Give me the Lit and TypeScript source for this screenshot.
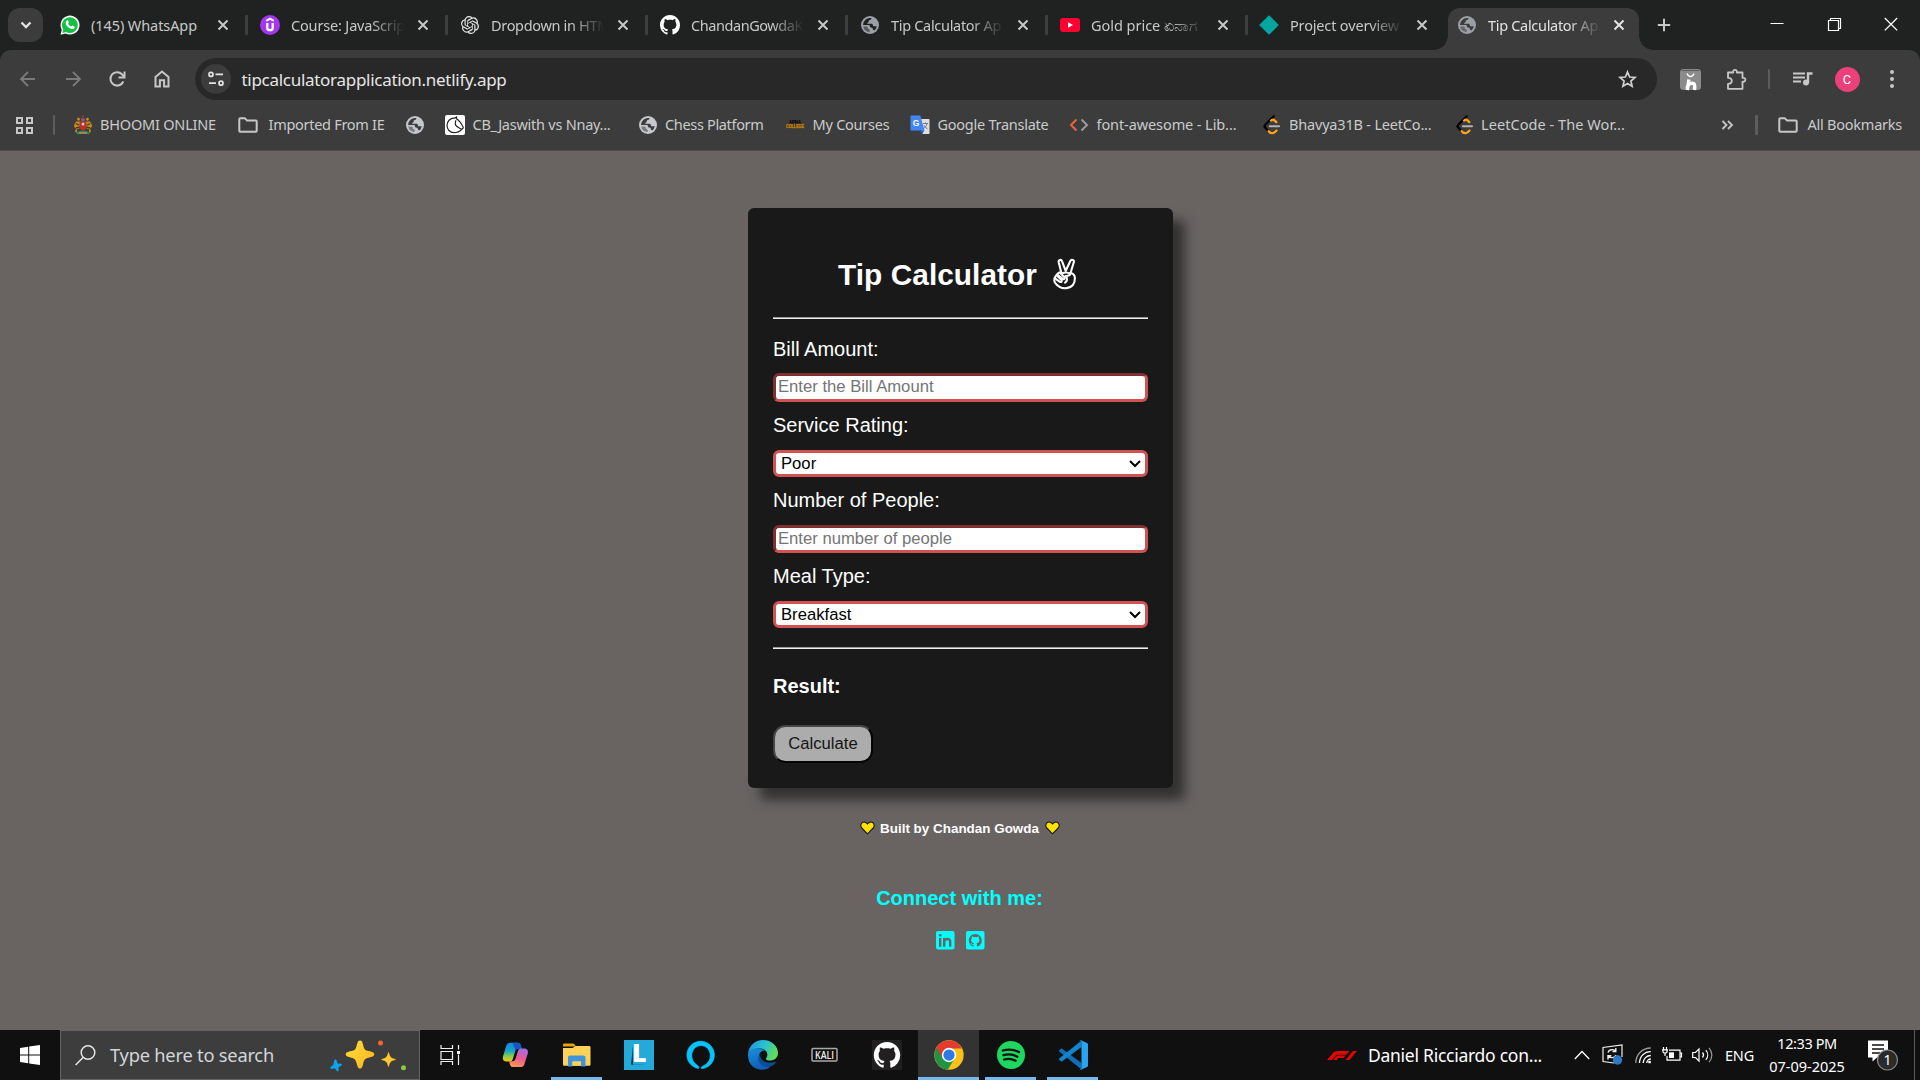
import { LitElement, html, css, svg } from "lit";
import { customElement } from "lit/decorators.js";

const OCTOCAT =
  "M8 0C3.58 0 0 3.58 0 8c0 3.54 2.29 6.53 5.47 7.59.4.07.55-.17.55-.38 0-.19-.01-.82-.01-1.49-2.01.37-2.53-.49-2.69-.94-.09-.23-.48-.94-.82-1.13-.28-.15-.68-.52-.01-.53.63-.01 1.08.58 1.23.82.72 1.21 1.87.87 2.33.66.07-.52.28-.87.51-1.07-1.78-.2-3.64-.89-3.64-3.95 0-.87.31-1.59.82-2.15-.08-.2-.36-1.02.08-2.12 0 0 .67-.21 2.2.82.64-.18 1.32-.27 2-.27s1.36.09 2 .27c1.53-1.04 2.2-.82 2.2-.82.44 1.1.16 1.92.08 2.12.51.56.82 1.27.82 2.15 0 3.07-1.87 3.75-3.65 3.95.29.25.54.73.54 1.48 0 1.07-.01 1.93-.01 2.2 0 .21.15.46.55.38A8.01 8.01 0 0016 8c0-4.42-3.58-8-8-8z";
const KNOT =
  "M22.2819 9.8211a5.9847 5.9847 0 0 0-.5157-4.9108 6.0462 6.0462 0 0 0-6.5098-2.9A6.0651 6.0651 0 0 0 4.9807 4.1818a5.9847 5.9847 0 0 0-3.9977 2.9 6.0462 6.0462 0 0 0 .7427 7.0966 5.98 5.98 0 0 0 .511 4.9107 6.051 6.051 0 0 0 6.5146 2.9001A5.9847 5.9847 0 0 0 13.2599 24a6.0557 6.0557 0 0 0 5.7718-4.2058 5.9894 5.9894 0 0 0 3.9977-2.9001 6.0557 6.0557 0 0 0-.7475-7.0729zm-9.022 12.6081a4.4755 4.4755 0 0 1-2.8764-1.0408l.1419-.0804 4.7783-2.7582a.7948.7948 0 0 0 .3927-.6813v-6.7369l2.02 1.1686a.071.071 0 0 1 .038.052v5.5826a4.504 4.504 0 0 1-4.4945 4.4944zm-9.6607-4.1254a4.4708 4.4708 0 0 1-.5346-3.0137l.142.0852 4.783 2.7582a.7712.7712 0 0 0 .7806 0l5.8428-3.3685v2.3324a.0804.0804 0 0 1-.0332.0615L9.74 19.9502a4.4992 4.4992 0 0 1-6.1408-1.6464zM2.3408 7.8956a4.485 4.485 0 0 1 2.3655-1.9728V11.6a.7664.7664 0 0 0 .3879.6765l5.8144 3.3543-2.0201 1.1685a.0757.0757 0 0 1-.071 0l-4.8303-2.7865A4.504 4.504 0 0 1 2.3408 7.872zm16.5963 3.8558L13.1038 8.364 15.1192 7.2a.0757.0757 0 0 1 .071 0l4.8303 2.7913a4.4944 4.4944 0 0 1-.6765 8.1042v-5.6772a.79.79 0 0 0-.407-.667zm2.0107-3.0231l-.142-.0852-4.7735-2.7818a.7759.7759 0 0 0-.7854 0L9.409 9.2297V6.8974a.0662.0662 0 0 1 .0284-.0615l4.8303-2.7866a4.4992 4.4992 0 0 1 6.6802 4.66zM8.3065 12.863l-2.02-1.1638a.0804.0804 0 0 1-.038-.0567V6.0742a4.4992 4.4992 0 0 1 7.3757-3.4537l-.142.0805L8.704 5.459a.7948.7948 0 0 0-.3927.6813zm1.0976-2.3654l2.602-1.4998 2.6069 1.4998v2.9994l-2.5974 1.4997-2.6067-1.4997Z";

const icon = (w: number, h: number, vb: string, body: unknown) =>
  html`<svg class="ico" width=${w} height=${h} viewBox=${vb} fill="none">${body}</svg>`;

const globe = (c: string, bg: string) =>
  icon(20, 20, "0 0 20 20", svg`
    <circle cx="10" cy="10" r="9" fill=${c}/>
    <path d="M11.300 3.100c.3 1.300-.6 1.900-1.500 2-1 .1-1.200.8-1.100 1.500.1.700-.4 1.100-1.200 1.200-.700.1-.7.900.1 1h3.500c1.200 0 1.800.7 1.900 1.600.1.700.600.900 1.300.9h2.500a7 7 0 0 1-2.600 4.200c-.9-.3-1.400-1-1.400-1.900 0-1.500-2.800-.4-2.900-2.200 0-.9-.500-1.300-1.400-1.300H3A7 7 0 0 1 11.300 3.100z" fill=${bg}/>
    <path d="M3.200 11.500h3.300c1 .1 1.200.8 1.300 1.600.1.900.700 1 1.400 1.300.8.300.8 1.500.3 2.600A7 7 0 0 1 3.200 11.500z" fill=${bg} opacity=".55"/>`);

const folder = () =>
  icon(22, 20, "0 0 22 20", svg`<path d="M2.300 15.800V4.200c0-.6.400-.9.900-.9h4.600l2.300 2.300h8.700c.6 0 .9.400.9.900v9.300c0 .5-.3.900-.9.900H3.200c-.5 0-.9-.4-.9-.9z" stroke="#c7c7c7" stroke-width="2"/>`);

const leet = () =>
  icon(20, 20, "0 0 20 20", svg`
    <path d="M11.800 1.200L3.300 9.700c-.9.900-.9 2 0 2.900l3.600 3.900" stroke="#000" stroke-width="2.300" stroke-linecap="round"/>
    <path d="M9 5.600c1.300-1.100 2.700-1 3.800 0l1.500 1.500M6.700 16.200c1.700 2.300 4.600 2.500 6.300.8l1.500-1.500" stroke="#ffa116" stroke-width="2.300" stroke-linecap="round"/>
    <path d="M7.800 11.300h9.200" stroke="#b3b3b3" stroke-width="2.100" stroke-linecap="round"/>`);

const cross = (c: string) =>
  icon(12, 12, "0 0 12 12", svg`<path d="M1.500 1.500l9 9M10.500 1.500l-9 9" stroke=${c} stroke-width="2"/>`);

const favicons = {
  whatsapp: icon(20, 20, "0 0 20 20", svg`
    <path d="M.5 19.700l1.300-4.900A9.500 9.500 0 1 1 5.500 18.400z" fill="#fff"/>
    <path d="M2.300 17.900l1-3.400A7.900 7.900 0 1 1 6 17z" fill="#12c143"/>
    <path d="M6.900 5.400c.4-.4 1-.3 1.200.2l.7 1.600c.1.400-.6 1-.7 1.400.6 1.300 1.800 2.400 3.200 3 .4-.1.900-1.100 1.300-1l1.800.9c.5.3.2 1.500-.4 1.900-2 1.400-4.700.1-6.500-1.800-1.700-1.900-2.800-4.600-.6-6.200z" fill="#fff"/>`),
  udemy: icon(20, 20, "0 0 20 20", svg`
    <circle cx="10" cy="10" r="10" fill="#a435f0"/>
    <path d="M6.200 5.900L10 3.700l3.800 2.200" stroke="#fff" stroke-width="1.900"/>
    <path d="M7.300 8v4.900c0 1.500 1 2.300 2.700 2.300s2.700-.8 2.700-2.300V8" stroke="#fff" stroke-width="2.300"/>`),
  knot: icon(18, 18, "0 0 24 24", svg`<path d=${KNOT} fill="#e8e8e8"/>`),
  github: icon(20, 20, "0 0 16 16", svg`<path d=${OCTOCAT} fill="#fff"/>`),
  globe: globe("#9aa0a6", "#202222"),
  globeActive: globe("#9aa0a6", "#3c3c3c"),
  youtube: icon(20, 20, "0 0 20 20", svg`<rect y="3" width="20" height="14" rx="3" fill="#ff0033"/><path d="M8 7.300v5.400l5-2.700z" fill="#fff"/>`),
  diamond: icon(20, 20, "0 0 20 20", svg`<path d="M10 1.200L18.800 10 10 18.800 1.200 10z" fill="#05a6a1" stroke="#05a6a1" stroke-width="1.600" stroke-linejoin="round"/>`),
};

const tabs = [
  { icon: favicons.whatsapp, title: "(145) WhatsApp", w: 106, box: 200 },
  { icon: favicons.udemy, title: "Course: JavaScrip", w: 114, box: 200 },
  { icon: favicons.knot, title: "Dropdown in HTM", w: 119, box: 200 },
  { icon: favicons.github, title: "ChandanGowdaK", w: 112, box: 200 },
  { icon: favicons.globe, title: "Tip Calculator Ap", w: 110, box: 200 },
  { icon: favicons.youtube, title: "Gold price ", w: 73, tail: "ಏನಾಗ", box: 199 },
  { icon: favicons.diamond, title: "Project overview", w: 109, box: 198 },
  { icon: favicons.globeActive, title: "Tip Calculator Ap", w: 110, box: 190.5, active: true },
];

const emblem = icon(20, 20, "0 0 20 20", svg`
  <path d="M9 .500h2v2H9zM7.500 3h5l-1 3h-3z" fill="#a33a2c"/>
  <path d="M4 3.500l2-1 1 2-2 1.500zM16 3.500l-2-1-1 2 2 1.500z" fill="#cf9a1c"/>
  <path d="M1 12c0-3 1-5 3-6l1 1 2-1.500.5 5.500L6 14H4v3H2l1-4zM19 12c0-3-1-5-3-6l-1 1-2-1.500-.5 5.500L14 14h2v3h2l-1-4z" fill="#bd8c1e"/>
  <path d="M2.500 8.500L6 10M17.500 8.500L14 10M3 13l4-1M17 13l-4-1" stroke="#4d3c1e" stroke-width="1.300"/>
  <path d="M6.500 6h7v6c0 2-2 3-3.500 4-1.500-1-3.500-2-3.500-4z" fill="#b8302c"/>
  <circle cx="10" cy="9" r="1.500" fill="#e3c9b8"/><path d="M8 4.500h4M8.500 5.500h3" stroke="#3f74b5"/>
  <path d="M2.500 17.500c5-2.500 10-2.500 15 0l-2 2c-3.500-1.500-7.500-1.500-11 0z" fill="#3d7d5d"/>
  <path d="M6 18h8" stroke="#c9a648" stroke-width="1.200"/>`);

const bookmarks = [
  { icon: emblem, title: "BHOOMI ONLINE", w: 116, box: 164, gap: 7 },
  { icon: folder(), title: "Imported From IE", w: 116, box: 168, gap: 9.5 },
  { icon: globe("#c4c7cc", "#3c3c3c"), title: "", w: 0, box: 40, gap: 0 },
  {
    icon: icon(20, 20, "0 0 20 20", svg`<rect width="20" height="20" rx="2" fill="#fff"/>
      <path d="M9.500 3.200C5 3 2 6.500 2 10.400c0 4 3 7.200 6.800 7.300 3.600 0 5.800-1 7.700-3M9.500 3.200l2-1.200.2 2c3.200 1.800 5 5 6.500 8.300.3 1-1.200 2.200-2.200 1.700-2-1.500-4.600-2-5.500-4.200-.6-1.500.3-3 .2-4.600" stroke="#222" stroke-width="1.200"/>`),
    title: "CB_Jaswith vs Nnay...", w: 138, box: 193, gap: 7.5,
  },
  { icon: globe("#c4c7cc", "#3c3c3c"), title: "Chess Platform", w: 98.5, box: 147, gap: 7 },
  {
    icon: icon(20, 20, "0 0 20 20", svg`<text x="10" y="8.800" text-anchor="middle" textLength="12" lengthAdjust="spacingAndGlyphs" font-family="Liberation Sans" font-weight="700" font-size="5" fill="#000">APNA</text>
      <text x="10" y="13" text-anchor="middle" textLength="18" lengthAdjust="spacingAndGlyphs" font-family="Liberation Sans" font-weight="700" font-size="5" fill="#f5a80c" stroke="#a86c00" stroke-width=".3">COLLEGE</text>`),
    title: "My Courses", w: 77, box: 125, gap: 7.5,
  },
  {
    icon: icon(20, 20, "0 0 20 20", svg`<path d="M9 4h9.500c.6 0 1 .4 1 1v13c0 .6-.4 1-1 1h-6z" fill="#dedede"/>
      <path d="M13 8.500h5M15.500 7.500v1M17 8.500c-.5 2.500-2 4.200-4 5.200M14 10.500c.8 1.500 2 2.600 3.500 3.300" stroke="#6c7a89"/>
      <path d="M1.500.6h8.800l4.200 14.800H1.500c-.6 0-1-.4-1-1V1.600c0-.6.400-1 1-1z" fill="#4285f4"/><path d="M9.300 15.400h5.200L12 19z" fill="#2a56c6"/>
      <text x="6" y="11" text-anchor="middle" font-family="Liberation Sans" font-weight="700" font-size="8.500" fill="#fff">G</text>`),
    title: "Google Translate", w: 111, box: 159, gap: 7.5,
  },
  {
    icon: icon(20, 20, "0 0 20 20", svg`<path d="M7.500 4.500L2 10l5.500 5.500" stroke="#e8653a" stroke-width="2"/><path d="M12.500 4.500L18 10l-5.500 5.500" stroke="#9b9b9b" stroke-width="2"/>`),
    title: "font-awesome - Lib...", w: 140, box: 193, gap: 7.5,
  },
  { icon: leet(), title: "Bhavya31B - LeetCo...", w: 142.5, box: 193, gap: 7 },
  { icon: leet(), title: "LeetCode - The Wor...", w: 144, box: 193, gap: 6 },
];

const apps = [
  { art: icon(28, 32, "0 0 28 32", svg`
      <defs>
        <linearGradient id="cpA" x1="0" y1="0" x2="0" y2="1"><stop offset="0" stop-color="#1487e0"/><stop offset=".45" stop-color="#18a6c9"/><stop offset=".7" stop-color="#7fce4b"/><stop offset="1" stop-color="#f4c71c"/></linearGradient>
        <linearGradient id="cpB" x1=".6" y1="0" x2=".3" y2="1"><stop offset="0" stop-color="#a46ae8"/><stop offset=".5" stop-color="#ec5a8e"/><stop offset="1" stop-color="#fb9a50"/></linearGradient>
      </defs>
      <g transform="translate(1.500 2.500) scale(.92 .84)">
      <path d="M8.500 1.500h8.200c1.600 0 2.400 1 2.900 2.500L21 8.500h-4c-1.800 0-2.600 1.200-3.200 3.200l-2.600 9.100c-.6 2-1.600 3-3.600 3H4.200C1 23.800-.4 21 .6 17.500L4 5.500c.7-2.500 2-4 4.500-4z" fill="url(#cpA)"/>
      <path d="M11 1.500h5.700c1.600 0 2.400 1 2.900 2.500L21 8.500h-4c-1.400 0-2.400.8-3 2.400z" fill="#1b55c4"/>
      <path d="M19.500 30.500h-8.200c-1.600 0-2.400-1-2.900-2.500L7 23.500h4c1.800 0 2.600-1.200 3.200-3.200l2.600-9.100c.6-2 1.600-3 3.600-3h3.400c3.200 0 4.600 2.800 3.600 6.300L24 26.500c-.7 2.500-2 4-4.500 4z" fill="url(#cpB)"/></g>`), open: false },
  { art: icon(28, 24, "0 0 28 24", svg`
      <path d="M0 2c0-1 .6-1.500 1.500-1.500H10c.8 0 1.200.3 1.600.9L13 3.500H0z" fill="#e5a50b"/>
      <path d="M0 5h9.500l3-2H26c1 0 1.500.6 1.500 1.500v16.700c0 1-.6 1.500-1.500 1.500H1.500C.6 22.700 0 22.200 0 21.200z" fill="#ffd257"/>
      <path d="M5 23.500V14.500c0-1.200.8-2 2-2h13.500c1.200 0 2 .8 2 2v9h-4.500V18.500h-8.500v5z" fill="#3e95dc"/>
      <path d="M9.500 22.700V18.500H18v4.200z" fill="#ffd257"/>`), open: true },
  { art: icon(30, 30, "0 0 30 30", svg`<rect width="30" height="30" fill="#24a9d8"/><path d="M9 5.500v19.500h13L7 24.500z" fill="#0c3557"/><text x="8" y="22.200" font-family="Open Sans" font-weight="800" font-size="25" fill="#fff">L</text>`), open: false },
  { art: icon(30, 30, "0 0 30 30", svg`<path d="M12.500 28.500A13.700 13.700 0 1 1 16 28.600c-1-.3-1-1-.4-1.700 1-1 8.700-3 8.700-11.100 0-6-4-10.200-9.300-10.200S5.700 10 5.700 15.800c0 4.200 2.300 7.500 5.800 9.700 1.500 1 1.700 1.600 1 3z" fill="#04c4fb" stroke="#04c4fb" stroke-width=".8"/>`), open: false },
  { art: icon(30, 30, "0 0 30 30", svg`
      <defs><linearGradient id="eA" x1="0" y1=".3" x2="1" y2=".6"><stop offset="0" stop-color="#1d9ae0"/><stop offset=".5" stop-color="#2bc0d3"/><stop offset="1" stop-color="#66e04e"/></linearGradient>
      <linearGradient id="eB" x1="0" y1="0" x2=".4" y2="1"><stop offset="0" stop-color="#1a8fdd"/><stop offset="1" stop-color="#0f5fb9"/></linearGradient></defs>
      <path d="M0 14C.6 6 7 0 15 0c9 0 15 6.500 15 13 0 5-4 7.500-8.300 7.500-3.300 0-4.400-1.200-3.400-2.400 2.800-3.800 0-9.500-6.300-9.500C6.500 8.600 2 10 0 14z" fill="url(#eA)"/>
      <path d="M0 15c0-4.500 4.500-7 9-6.800 4 .2 6.500 1.300 8 3-4.500-.8-6.500 3-6 7 .5 5 5 9.800 11.500 8.500C16 32.500 0 30.500 0 15z" fill="url(#eB)"/>
      <path d="M11.600 14.500C8.200 19 12 28 21 26.900c3-.5 5.400-2.400 6.700-4.400.4-.8-.3-1-.8-.8C19 25 12.500 20.500 11.600 14.500z" fill="#0b4d98"/>`), open: false },
  { art: icon(28, 16, "0 0 28 16", svg`<rect x="1" y="1.500" width="25" height="12.500" rx="1" stroke="#a9a9a9" stroke-width="1.500"/><text x="13.500" y="12" text-anchor="middle" textLength="19" lengthAdjust="spacingAndGlyphs" font-family="Open Sans" font-weight="600" font-size="11" fill="#eee">KALI</text>`), open: false },
  { art: icon(30, 30, "0 0 30 30", svg`<rect width="30" height="30" fill="#211f20"/><path d=${OCTOCAT} fill="#fff" transform="translate(1.800 2) scale(1.650)"/>`), open: false },
  { art: icon(30, 30, "0 0 48 48", svg`
      <circle cx="24" cy="24" r="23.500" fill="#fbc116"/>
      <path d="M24 24L3.500 12.500A23.500 23.500 0 0 0 22 47.400l11-18z" fill="#229342"/>
      <path d="M24 13.500h20.700A23.500 23.500 0 0 0 3.600 12.300l10.600 17z" fill="#e33b2e"/>
      <circle cx="24" cy="24" r="11.500" fill="#fff"/><circle cx="24" cy="24" r="9" fill="#2c7be5"/>`), open: true, current: true },
  { art: icon(28, 28, "0 0 28 28", svg`<circle cx="14" cy="14" r="14" fill="#1ed760"/><path d="M5.800 9.500c5.500-1.500 11.500-1 16.200 1.600M6.500 14.200c4.700-1.300 9.700-.8 13.800 1.500M7.200 18.500c3.800-1 8-.6 11.400 1.300" stroke="#111" stroke-width="2.300" stroke-linecap="round"/>`), open: true },
  { art: icon(30, 30, "0 0 30 30", svg`
      <path d="M1.200 10.300L3 8.700c.4-.3.800-.3 1.200 0L23.500 23v6.500L1.200 11.500c-.4-.4-.4-.8 0-1.200z" fill="#0e6fb8"/>
      <path d="M1.200 19.700L3 21.300c.4.3.8.3 1.200 0L23.500 7V.5L1.200 18.500c-.4.400-.4.800 0 1.200z" fill="#1284ce"/>
      <path d="M23 .2L29 3c.6.300 1 .8 1 1.500v21c0 .700-.4 1.200-1 1.500l-6 2.800c-.6.3-1.300 0-1.700-.5 1 .6 2.200 0 2.200-1.200V1.900c0-1.200-1.200-1.800-2.200-1.200.4-.5 1.100-.8 1.700-.5z" fill="#27a4f2"/>`), open: true },
];

@customElement("app-root")
export class AppRoot extends LitElement {
  static styles = css`
    :host { display: block; width: 1920px; height: 1080px; overflow: hidden; font-family: "Noto Sans", "Open Sans", sans-serif; }
    .screen { display: flex; flex-direction: column; width: 1920px; height: 1080px; }
    .ico { display: block; flex: none; overflow: visible; }
    .fit { display: inline-block; white-space: pre; flex: none; }

    .strip { display: flex; height: 50px; background: #202222; box-sizing: border-box; align-items: flex-start; }
    .search-tabs { width: 35px; height: 34px; margin: 8px 8px 0; border-radius: 12px; background: #3c3c3c; display: grid; place-items: center; }
    .tab { display: flex; align-items: center; height: 50px; padding-left: 9px; box-sizing: border-box; position: relative; flex: none; }
    .fav { width: 20px; display: grid; place-items: center; margin-right: 11px; }
    .title { width: 113px; flex: none; overflow: hidden; white-space: nowrap; font-size: 14.5px; line-height: 24px; color: #c7c9c8; -webkit-mask-image: linear-gradient(90deg, #000 80px, transparent 113px); }
    .title.whole { -webkit-mask-image: none; }
    .tail { font-size: 15.5px; }
    .close { width: 12px; margin-left: 12.5px; }
    .sep { width: 2.5px; height: 20px; margin-left: 16.5px; background: #3d3f3f; border-radius: 1px; }
    .tab.active { height: 42px; margin: 8px 0 0; background: #3c3c3c; border-radius: 12px 12px 0 0; padding-bottom: 8px; }
    .tab.active .title { color: #e3e3e3; width: 111px; }
    .tab.active .close { margin-left: 14px; }
    .tab.active::before, .tab.active::after { content: ""; position: absolute; bottom: 0; width: 14px; height: 14px; }
    .tab.active::before { left: -14px; background: radial-gradient(circle at 0 0, transparent 13.5px, #3c3c3c 14px); }
    .tab.active::after { right: -14px; background: radial-gradient(circle at 100% 0, transparent 13.5px, #3c3c3c 14px); }
    .newtab { margin: 18px 0 0 18.5px; }
    .winbtns { margin-left: auto; display: flex; gap: 43px; padding: 17px 22px 0 0; }

    .chrome { background: #202222; height: 101px; flex: none; }
    .bars { height: 101px; box-sizing: border-box; border-bottom: 1px solid #504f4e; border-radius: 11px 11px 0 0; background: #3c3c3c; display: flex; flex-direction: column; padding-top: 8px; }
    .toolbar { display: flex; align-items: center; height: 42px; padding-left: 18px; flex: none; }
    .nav { display: flex; gap: 24.7px; width: 177px; }
    .omni { display: flex; align-items: center; width: 1462px; height: 42px; border-radius: 21px; background: #282828; box-sizing: border-box; padding: 0 19px 0 6px; }
    .site { width: 30px; height: 30px; border-radius: 50%; background: #3c3c3c; display: grid; place-items: center; }
    .url { margin-left: 10.5px; padding-top: 1.5px; font-size: 17px; line-height: 24px; color: #e6e6e6; flex: 1; }
    .tools { display: flex; align-items: center; margin-left: 23px; }
    .vsep { width: 2.5px; height: 20px; background: #5d5d5d; border-radius: 1px; flex: none; }
    .avatar { width: 25px; height: 25px; border-radius: 50%; background: #ec407a; color: #fff; font: 13px/25px "Roboto", sans-serif; text-align: center; margin: 0 30.5px 0 21px; }
    .marks { display: flex; align-items: center; height: 50px; padding-left: 15px; font-size: 14.5px; line-height: 20px; color: #c9cbcb; }
    .marks .fit { padding-bottom: 2px; }
    .marks .start { margin-left: 18.5px; margin-right: 18px; }
    .mark { display: flex; align-items: center; flex: none; }
    .rest { margin-left: auto; display: flex; align-items: center; padding-right: 18px; }

    .page { height: 879px; background: #696462; display: flex; flex-direction: column; align-items: center; font-family: "Liberation Sans", Arial, sans-serif; flex: none; }
    .card { margin: 57px 0 0 1px; width: 425px; height: 580px; box-sizing: border-box; padding: 50px 25px 25px; border-radius: 6px; background: #191919; color: #fff; box-shadow: 12px 12px 12px #333131; display: flex; flex-direction: column; flex: none; }
    .card h2 { margin: 0 0 25px; padding-left: 65px; font-size: 29.8px; line-height: 34px; height: 34px; display: flex; align-items: center; gap: 16px; flex: none; }
    .rule { border-top: 1px solid #9a9a9a; border-bottom: 1px solid #eee; flex: none; }
    label { font-size: 20px; line-height: 23px; height: 23px; margin: 12px 0 13px; flex: none; }
    label.first { margin: 19px 0 12px; }
    input { box-sizing: border-box; width: 375px; height: 29px; border: 3px solid; border-color: #7f3030 #d05252 #d05252 #7f3030; border-radius: 6px; padding: 0 2px 1px; font: 16.67px "Liberation Sans", sans-serif; background: #fff; flex: none; }
    input.short { height: 28px; }
    input::placeholder { color: #757575; opacity: 1; }
    select { zoom: 1.25; box-sizing: border-box; width: 300px; height: 21.6px; border: 2.4px solid #d05252; border-radius: 5px; font: 13.333px "Liberation Sans", sans-serif; color: #000; background-color: #fff; padding: 0; flex: none; }
    .rule.last { margin-top: 19px; }
    .result { margin: 26px 0 27px; font-size: 20px; line-height: 23px; font-weight: 700; }
    button { width: 100px; height: 38px; box-sizing: border-box; border: 2px solid; border-color: #454545 #050505 #050505 #454545; border-radius: 12.5px; background: #acacac; color: #151515; font: 16.67px "Liberation Sans", sans-serif; padding: 0; flex: none; }
    .built { margin: 32px 1px 0 0; height: 16px; display: flex; align-items: center; gap: 5.5px; color: #fff; font-size: 13.4px; font-weight: 700; }
    .connect { margin: 50.5px 1px 0 0; font-size: 20px; line-height: 23px; font-weight: 700; color: #0ff; }
    .links { margin-top: 21.5px; display: flex; gap: 11.5px; }

    .taskbar { height: 50px; background: #101010; display: flex; color: #fff; flex: none; }
    .win { width: 60px; display: grid; place-items: center; }
    .search { width: 360px; box-sizing: border-box; border: 1px solid #656565; background: #3d3d3d; display: flex; align-items: center; padding-left: 14px; font-size: 18.3px; color: #d3d6da; }
    .search .fit { margin: 0 0 0 14px; line-height: 26px; }
    .spark { margin-left: 56px; }
    .view { width: 60px; display: grid; place-items: center; margin-right: 4px; }
    .app { width: 61px; height: 50px; display: grid; place-items: center; position: relative; margin-right: 1px; }
    .app.open::after { content: ""; position: absolute; bottom: 0; left: 5px; right: 5px; height: 3px; background: #76b9ed; }
    .app.current { background: #333; }
    .app.current::after { left: 0; right: 0; }
    .tray { margin-left: auto; display: flex; align-items: center; font-size: 14.5px; }
    .news { font-size: 17.5px; margin: 0 32px 0 11px; }
    .clock { display: flex; flex-direction: column; align-items: center; width: 76px; margin: 0 23px 0 15px; line-height: 23.3px; font-size: 14.5px; }
    .peek { width: 1px; height: 50px; background: #5c5c5c; margin: 0 5px 0 15px; }
  `;

  /** Spreads every label over its stated width by adjusting the tracking. */
  protected firstUpdated(): void {
    this.renderRoot.querySelectorAll<HTMLElement>(".fit").forEach((el) => {
      const want = Number(el.dataset.w);
      const n = (el.textContent ?? "").length;
      if (want && n) el.style.letterSpacing = `${(want - el.getBoundingClientRect().width) / n}px`;
    });
  }

  private fit(text: string, w: number) {
    return html`<span class="fit" data-w=${w}>${text}</span>`;
  }

  private renderTabs() {
    return html`<div class="strip">
      <div class="search-tabs">${icon(12, 8, "0 0 12 8", svg`<path d="M1.500 1.500L6 6l4.500-4.500" stroke="#e3e3e3" stroke-width="2.300"/>`)}</div>
      ${tabs.map((t, i) => html`<div class="tab ${t.active ? "active" : ""}" style="width:${t.box}px">
        <div class="fav">${t.icon}</div>
        <div class="title ${i === 0 ? "whole" : ""}">${this.fit(t.title, t.w)}${t.tail ? html`<span class="tail">${t.tail}</span>` : ""}</div>
        <div class="close">${cross(t.active ? "#e3e3e3" : "#c7c7c7")}</div>
        ${i < 6 ? html`<div class="sep"></div>` : ""}
      </div>`)}
      <div class="newtab">${icon(14, 14, "0 0 14 14", svg`<path d="M7 .8v12.400M.8 7h12.400" stroke="#c7c7c7" stroke-width="2"/>`)}</div>
      <div class="winbtns">
        ${icon(14, 14, "0 0 14 14", svg`<path d="M.5 6.500h13" stroke="#fff"/>`)}
        ${icon(14, 14, "0 0 14 14", svg`<path d="M1.500 3.500h10v10h-10zM3.500 3V1.500h10v10H12" stroke="#fff" stroke-width="1.200"/>`)}
        ${icon(14, 14, "0 0 14 14", svg`<path d="M.8 1l12.400 12.400M13.200 1L.8 13.400" stroke="#fff" stroke-width="1.300"/>`)}
      </div>
    </div>`;
  }

  private renderBars() {
    return html`<div class="chrome"><div class="bars">
      <div class="toolbar">
        <div class="nav">
          ${icon(20, 20, "0 0 20 20", svg`<path d="M17 10H3.500M10 3l-7 7 7 7" stroke="#7a7a7a" stroke-width="1.800"/>`)}
          ${icon(20, 20, "0 0 20 20", svg`<path d="M3 10h13.500M10 3l7 7-7 7" stroke="#7a7a7a" stroke-width="1.800"/>`)}
          ${icon(20, 20, "0 0 20 20", svg`<path d="M16.300 12.500A6.700 6.700 0 1 1 15 5.300L17 7.500" stroke="#c7c7c7" stroke-width="2"/><path d="M17.500 2.500v6h-6" stroke="#c7c7c7" stroke-width="2"/>`)}
          ${icon(20, 20, "0 0 20 20", svg`<path d="M3.500 17.500V8L10 2.500 16.500 8v9.500h-4.400V11.300H7.900v6.200z" stroke="#c7c7c7" stroke-width="2"/>`)}
        </div>
        <div class="omni">
          <div class="site">${icon(16, 16, "0 0 16 16", svg`<circle cx="3" cy="3.400" r="2" stroke="#e3e3e3" stroke-width="1.700"/><path d="M7.500 3.400h7.500M1 12.200h7" stroke="#e3e3e3" stroke-width="1.800"/><circle cx="13" cy="12.200" r="2" stroke="#e3e3e3" stroke-width="1.700"/>`)}</div>
          <div class="url">${this.fit("tipcalculatorapplication.netlify.app", 265)}</div>
          ${icon(21, 20, "0 0 21 20", svg`<path d="M10.500 3l2.100 5 5.400.5-4.100 3.500 1.200 5.300-4.600-2.800-4.600 2.800 1.200-5.300L3 8.500l5.400-.5z" stroke="#d0d0d0" stroke-width="1.700"/>`)}
        </div>
        <div class="tools">
          ${icon(21, 21, "0 0 21 21", svg`<rect width="21" height="21" rx="3.500" fill="#8b8b8b"/><path d="M2 1.500h17" stroke="#5d5d5d"/><path d="M7 4.500c1.500 4 5.500 4 7 0" stroke="#fff" stroke-width="1.300"/><path d="M7.300 21l1.600-10.500M7 19.500c.7-4.500 2.500-5.200 5-5.200 3 0 3 2 2.500 6.700" stroke="#fff" stroke-width="3.400"/>`)}
          <span style="width:25px"></span>
          ${icon(21, 21, "0 0 21 21", svg`<path d="M2 3.500h5.200c-.4-1.800.6-2.700 1.800-2.700s2.200.9 1.800 2.700h5.700v5.400c1.900-.3 2.900.6 2.900 1.900s-1 2.200-2.900 1.900v7.100H2v-5c2.600 0 3.800-1.400 3.800-3S4.600 8.800 2 8.800z" stroke="#c7c7c7" stroke-width="1.800" stroke-linejoin="round"/>`)}
          <span style="width:20.5px"></span><span class="vsep"></span><span style="width:22.5px"></span>
          ${icon(21, 18, "0 0 21 18", svg`<path d="M0 3.500h12M0 7.500h12M0 11.500h8" stroke="#c7c7c7" stroke-width="1.900"/><circle cx="13" cy="12.500" r="3" fill="#c7c7c7"/><path d="M15 13V3.500h4.500" stroke="#c7c7c7" stroke-width="2.400"/>`)}
          <div class="avatar">C</div>
          ${icon(4, 20, "0 0 4 20", svg`<circle cx="2" cy="3" r="2" fill="#c7c7c7"/><circle cx="2" cy="10" r="2" fill="#c7c7c7"/><circle cx="2" cy="17" r="2" fill="#c7c7c7"/>`)}
        </div>
      </div>
      <div class="marks">
        ${icon(19, 19, "0 0 19 19", svg`<path d="M2 2h5v5H2zM12 2h5v5h-5zM2 12h5v5H2zM12 12h5v5h-5z" stroke="#c7c7c7" stroke-width="2"/>`)}
        <div class="vsep start"></div>
        ${bookmarks.map((b) => html`<div class="mark" style="width:${b.box}px;gap:${b.gap}px">${b.icon}${b.title ? this.fit(b.title, b.w) : ""}</div>`)}
        <div class="rest">
          ${icon(13, 10, "0 0 13 10", svg`<path d="M1.500 1l4 4-4 4M7 1l4 4-4 4" stroke="#c7c7c7" stroke-width="1.800"/>`)}
          <span style="width:21px"></span><span class="vsep"></span><span style="width:19px"></span>
          ${folder()}<span style="width:9px"></span>${this.fit("All Bookmarks", 94.5)}
        </div>
      </div>
    </div></div>`;
  }

  private renderPage() {
    const heart = icon(15, 14, "0 0 15 14", svg`<path d="M7.500 12.800L1.800 7C.3 5.400.6 3 2 1.800c1.600-1.300 4-.9 5.500 1.200C9 .900 11.400.500 13 1.800c1.400 1.200 1.700 3.600.2 5.200z" fill="#ffe300" stroke="#1a1a1a" stroke-width="1.100"/>`);
    return html`<div class="page">
      <div class="card">
        <h2>${this.fit("Tip Calculator", 199)}
          ${icon(24, 32, "0 0 24 32", svg`<g stroke="#fff" stroke-width="2.100" stroke-linejoin="round" stroke-linecap="round" transform="translate(0 -1)">
            <path d="M8.300 14.500L5.700 4.300C5.200 1.800 8.300.9 9.100 3.300L12.700 12.800M12.900 12.500L17.300 3c1-2.200 4.200-1.200 3.500 1.200L17.500 15"/>
            <path d="M17.500 14.800c2.900.8 4.300 2.300 4.400 5.200.1 3-.5 5.300-2.200 7.300-2.600 3-9 4-12.700 1.800-3-1.800-5.500-3.500-5.700-6.600-.1-2 .5-3.400 1.700-4.800l1.700-2.100c.8-.9 1.900-1.400 3.600-1.100"/>
            <path d="M2.600 20.800l4 2.800c1.700 1.100 2.900-.6 1.600-1.900L4.900 18.600M5.200 17.200l4.500 3.600c1.500 1 2.700-.4 1.500-1.700L7.800 15.500M9 15.500c3.300-1.700 6.200-1.100 8.500.3-.5 1.800-2.500 2.300-5 2.200 2.700 1.900 1.600 5.200-.4 6.600"/></g>`)}
        </h2>
        <div class="rule"></div>
        <label class="first">Bill Amount:</label>
        <input type="text" placeholder="Enter the Bill Amount" />
        <label>Service Rating:</label>
        <select><option>Poor</option></select>
        <label>Number of People:</label>
        <input class="short" type="text" placeholder="Enter number of people" />
        <label>Meal Type:</label>
        <select><option>Breakfast</option></select>
        <div class="rule last"></div>
        <div class="result">Result:</div>
        <button>Calculate</button>
      </div>
      <div class="built">${heart}${this.fit("Built by Chandan Gowda", 159)}${heart}</div>
      <div class="connect">Connect with me:</div>
      <div class="links">
        ${icon(18.5, 19, "0 0 18.500 19", svg`<rect width="18.500" height="18.500" rx="2" fill="#0ff"/><rect x="2.900" y="3" width="2.700" height="2.600" rx="1.300" fill="#696463"/><path d="M4.200 7v8.800M8.200 7v8.800M8.200 10.500c0-3 6-3.600 6 0v5.300" stroke="#696463" stroke-width="2.400"/>`)}
        ${icon(18.5, 19, "0 0 18.500 19", svg`<rect width="18.500" height="18.500" rx="2" fill="#0ff"/><path d=${OCTOCAT} fill="#696463" transform="translate(2.800 2.900) scale(.81)"/>`)}
      </div>
    </div>`;
  }

  private renderTaskbar() {
    return html`<div class="taskbar">
      <div class="win">${icon(20, 20, "0 0 20 20", svg`<path d="M0 2.900L8.200 1.700v7.800H0zM9.200 1.500L20 0v9.500H9.200zM0 10.500h8.200v7.800L0 17.100zM9.200 10.500H20V20L9.200 18.500z" fill="#fff"/>`)}</div>
      <div class="search">
        ${icon(21, 21, "0 0 21 21", svg`<circle cx="13" cy="7.500" r="6.800" stroke="#e6e6e6" stroke-width="1.500"/><path d="M8.300 12.300L.6 20" stroke="#e6e6e6" stroke-width="1.500"/>`)}
        ${this.fit("Type here to search", 164)}
        <div class="spark">${icon(78, 34, "0 0 78 34", svg`
          <defs><linearGradient id="sp" x1="0" y1="0" x2="1" y2="1"><stop offset="0" stop-color="#ffdc3c"/><stop offset=".6" stop-color="#ffc62a"/><stop offset="1" stop-color="#f2a51c"/></linearGradient></defs>
          <g transform="translate(0 -1)">
          <path d="M30 3.500c2 0 2.500 1.800 3.300 5.200.9 3.500 1.800 4.500 5.200 5.300 3.600.9 5.800 1.300 5.800 3.300s-2.200 2.600-5.800 3.500c-3.400.8-4.300 2-5.200 5.400-.8 3.400-1.300 5.300-3.300 5.300s-2.500-1.900-3.400-5.300c-.8-3.400-1.800-4.600-5.200-5.400-3.400-.9-5.700-1.500-5.700-3.500s2.300-2.400 5.700-3.300c3.400-.8 4.400-1.800 5.200-5.300.9-3.400 1.400-5.200 3.400-5.200z" fill="url(#sp)"/>
          <path d="M58.500 15.500c1.500 5 2 5.500 7 7-5 1.500-5.500 2-7 7-1.500-5-2-5.500-7-7 5-1.500 5.500-2 7-7z" fill="url(#sp)" stroke="#fcc42c" stroke-width=".7" stroke-linejoin="round"/>
          <path d="M5.500 22.800c1.200 0 1 3.400 2 4.200 1 .6 3.700-.5 4 .6.300 1-2.800 1.600-3.400 2.600-.5 1 .7 3.500-.4 3.800-1.100.3-1.600-2.700-2.600-3-1.200-.4-4.200 1-4.500 0s2.700-2 3.200-3c.5-1.200.4-5.200 1.700-5.200z" fill="#0aa5ef" stroke="#0aa5ef"/>
          <circle cx="50.500" cy="6" r="2.500" fill="#f4652a"/><circle cx="73.500" cy="30.700" r="2.500" fill="#86cc3c"/></g>`)}</div>
      </div>
      <div class="view">${icon(20, 20, "0 0 20 20", svg`<path d="M1 0v3.500h11.500V0M1 6.500h11.500v8H1zM1 20v-3.500h11.500V20M18.500 0v4.500M18.500 9.500V20" stroke="#f0f0f0" stroke-width="1.200"/><rect x="17" y="6" width="3" height="3" fill="#f0f0f0"/>`)}</div>
      ${apps.map((a) => html`<div class="app ${a.open ? "open" : ""} ${a.current ? "current" : ""}">${a.art}</div>`)}
      <div class="tray">
        ${icon(30, 9, "0 0 30 9", svg`<path d="M0 9l5.500-6.500C7 .7 8.500 0 11 0h11.500L19.300 3.700H11.500c-1.600 0-2.300.3-3.300 1.500L5 9zM6.200 9l3-3.500c.6-.8 1.200-1 2.200-1h7.200L16.500 7h-5.200L9.700 9zM18.500 9L26 0h4l-7.500 9z" fill="#e10600"/>`)}
        <div class="news">${this.fit("Daniel Ricciardo con...", 174)}</div>
        ${icon(16, 10, "0 0 16 10", svg`<path d="M.8 9L8 1.500 15.200 9" stroke="#fff" stroke-width="1.300"/>`)}
        <span style="width:12px"></span>
        ${icon(21, 22, "0 0 21 22", svg`<g transform="translate(0 -1)"><path d="M12 20L1 18.500V4.500L20 2V14" stroke="#eee" stroke-width="1.200"/><path d="M6 9.500c1-3 5-3.800 7.300-1.600M13.800 5v3.500h-3.300M14 12c-1 3-5.200 3.500-7.500 1.200M6 16.500v-3.700h3.300" stroke="#eee" stroke-width="1.400"/><circle cx="15.500" cy="17" r="4.700" fill="#2f78c4"/></g>`)}
        <span style="width:12px"></span>
        ${icon(16, 16, "0 0 16 16", svg`<path d="M.8 16C.8 7.500 7.500 1 15.800 1" stroke="#9d9d9d" stroke-width="1.300"/><path d="M4.500 16c0-6.500 5-11.300 11.300-11.300M8.200 16c0-4.300 3.400-7.500 7.600-7.500" stroke="#fff" stroke-width="1.300"/><path d="M11.800 16c0-2.300 1.800-4 4-4" stroke="#fff" stroke-width="1.300"/><rect x="13.300" y="13.800" width="2.500" height="2.500" rx=".6" fill="#fff"/>`)}
        <span style="width:11px"></span>
        ${icon(20, 16, "0 0 20 16", svg`<path d="M7 3.200h11v10H5V9M18 6h1.500v4H18" stroke="#fff" stroke-width="1.200"/><rect x="7" y="5.300" width="5" height="5.700" fill="#fff"/><path d="M1.500 0v2.500M4.500 0v2.500M0 2.800h6M1 3v2c0 1.300 4 1.300 4 0V3M3 6v3" stroke="#fff" stroke-width="1.200"/>`)}
        <span style="width:10px"></span>
        ${icon(21, 16, "0 0 21 16", svg`<path d="M.7 5.500h2.800L7 2v12L3.500 10.500H.7z" stroke="#fff" stroke-width="1.200"/><path d="M10.500 5.500c1.300 1.500 1.300 3.500 0 5M13.800 3.200c2.500 2.800 2.500 6.800 0 9.600" stroke="#fff" stroke-width="1.200"/><path d="M17 .8c3.800 4.200 3.800 10.200 0 14.400" stroke="#9a9a9a" stroke-width="1.200"/>`)}
        <span style="width:12px"></span>
        ${this.fit("ENG", 29)}
        <div class="clock">${this.fit("12:33 PM", 59.5)}${this.fit("07-09-2025", 75.5)}</div>
        ${icon(31, 31, "0 0 31 31", svg`<g transform="translate(0 .5)"><path d="M0 0h20v17H9l-4.500 4V17H0z" fill="#fff"/><path d="M4 4.500h12M4 8.500h12M4 12.500h8" stroke="#101010" stroke-width="1.300"/><circle cx="19.500" cy="19.500" r="10" fill="#2b2b2b" stroke="#8a8a8a" stroke-width="1.200"/><text x="19.500" y="24.500" text-anchor="middle" font-family="Noto Sans" font-size="14" fill="#fff">1</text></g>`)}
        <div class="peek"></div>
      </div>
    </div>`;
  }

  render() {
    return html`<div class="screen">${this.renderTabs()}${this.renderBars()}${this.renderPage()}${this.renderTaskbar()}</div>`;
  }
}
